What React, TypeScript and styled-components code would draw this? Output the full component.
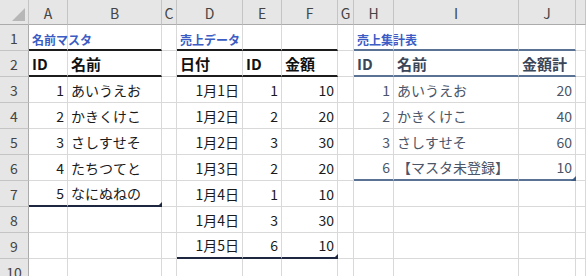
import React from "react";
import styled, { createGlobalStyle, css } from "styled-components";

type Align = "left" | "right";
type Tone = "plain" | "title" | "head" | "body" | "sumHead" | "sumBody";
type Rule = "grid" | "ink" | "navy" | "slate";

interface Cell {
  text?: string;
  align?: Align;
  tone?: Tone;
  rule?: Rule;
  handle?: "ink" | "slate";
}

const FONT = `"Noto Sans CJK JP", "Liberation Sans", sans-serif`;

const COLUMNS = [
  { label: "A", width: 39 },
  { label: "B", width: 94 },
  { label: "C", width: 15 },
  { label: "D", width: 66 },
  { label: "E", width: 39 },
  { label: "F", width: 56 },
  { label: "G", width: 16 },
  { label: "H", width: 40 },
  { label: "I", width: 125 },
  { label: "J", width: 57 },
  { label: "", width: 10 },
];
const ROW_COUNT = 10;

interface Table {
  title: string;
  cols: string[];
  heads: string[];
  align: Align[];
  rows: (string | number)[][];
  summary?: boolean;
}

const TABLES: Table[] = [
  {
    title: "名前マスタ",
    cols: ["A", "B"],
    heads: ["ID", "名前"],
    align: ["right", "left"],
    rows: [
      [1, "あいうえお"],
      [2, "かきくけこ"],
      [3, "さしすせそ"],
      [4, "たちつてと"],
      [5, "なにぬねの"],
    ],
  },
  {
    title: "売上データ",
    cols: ["D", "E", "F"],
    heads: ["日付", "ID", "金額"],
    align: ["right", "right", "right"],
    rows: [
      ["1月1日", 1, 10],
      ["1月2日", 2, 20],
      ["1月2日", 3, 30],
      ["1月3日", 2, 20],
      ["1月4日", 1, 10],
      ["1月4日", 3, 30],
      ["1月5日", 6, 10],
    ],
  },
  {
    title: "売上集計表",
    cols: ["H", "I", "J"],
    heads: ["ID", "名前", "金額計"],
    align: ["right", "left", "right"],
    rows: [
      [1, "あいうえお", 20],
      [2, "かきくけこ", 40],
      [3, "さしすせそ", 60],
      [6, "【マスタ未登録】", 10],
    ],
    summary: true,
  },
];

// lay the three list objects out into a sheet map keyed like "B3"
const buildSheet = () => {
  const sheet: Record<string, Cell> = {};
  TABLES.forEach((t) => {
    const edge: Rule = t.summary ? "slate" : "ink";
    t.cols.forEach((col, i) => {
      sheet[`${col}1`] = { text: i === 0 ? t.title : undefined, tone: "title", rule: edge };
      sheet[`${col}2`] = { text: t.heads[i], tone: t.summary ? "sumHead" : "head", rule: edge };
      t.rows.forEach((row, r) => {
        const last = r === t.rows.length - 1;
        sheet[`${col}${r + 3}`] = {
          text: String(row[i]),
          align: t.align[i],
          tone: t.summary ? "sumBody" : "body",
          rule: last ? (t.summary ? "slate" : "navy") : "grid",
          handle: last && i === t.cols.length - 1 ? (t.summary ? "slate" : "ink") : undefined,
        };
      });
    });
  });
  return sheet;
};

const SHEET = buildSheet();

const GlobalStyle = createGlobalStyle`
  html, body {
    margin: 0;
    padding: 0;
    background: #ffffff;
    overflow: hidden;
  }
`;

const Sheet = styled.div`
  display: grid;
  grid-template-columns: 29px ${COLUMNS.map((c) => `${c.width}px`).join(" ")};
  grid-template-rows: 25px repeat(${ROW_COUNT}, 26px);
  width: 586px;
  height: 276px;
  overflow: hidden;
  font-family: ${FONT};
  background: #ffffff;
`;

const Corner = styled.div`
  position: relative;
  background: #e6e6e6;
  border-right: 1px solid #c4c4c4;
  border-bottom: 1px solid #ababab;
  box-sizing: border-box;

  &::after {
    content: "";
    position: absolute;
    right: 3px;
    bottom: 3px;
    border-style: solid;
    border-width: 0 0 13px 13px;
    border-color: transparent transparent #b7b7b7 transparent;
  }
`;

const ColHead = styled.div`
  display: flex;
  align-items: center;
  justify-content: center;
  background: #e6e6e6;
  border-right: 1px solid #c4c4c4;
  border-bottom: 1px solid #ababab;
  box-sizing: border-box;
  color: #444444;
  font-size: 14px;
  padding-top: 1px;
`;

const RowHead = styled.div`
  display: flex;
  align-items: center;
  justify-content: center;
  background: #e6e6e6;
  border-right: 1px solid #ababab;
  border-bottom: 1px solid #c4c4c4;
  box-sizing: border-box;
  color: #444444;
  font-size: 14px;
`;

const ruleColor: Record<Rule, string> = {
  grid: "1px solid #d9d9d9",
  ink: "2px solid #1c1c1c",
  navy: "2px solid #1d2740",
  slate: "2px solid #5a7294",
};

const toneStyle: Record<Tone, ReturnType<typeof css>> = {
  plain: css``,
  title: css`
    font-size: 12px;
    font-weight: 700;
    color: #3a5cc4;
    align-items: flex-end;
    padding-bottom: 3px;
  `,
  head: css`
    font-size: 15px;
    font-weight: 700;
    color: #111111;
  `,
  body: css`
    font-size: 14px;
    color: #1a1a1a;
  `,
  sumHead: css`
    font-size: 15px;
    font-weight: 700;
    color: #3b4658;
  `,
  sumBody: css`
    font-size: 14px;
    color: #4b5568;
  `,
};

const SheetCell = styled.div<{ $align: Align; $tone: Tone; $rule: Rule }>`
  position: relative;
  display: flex;
  align-items: center;
  justify-content: ${(p) => (p.$align === "right" ? "flex-end" : "flex-start")};
  padding: 0 3px;
  box-sizing: border-box;
  border-right: 1px solid #d9d9d9;
  border-bottom: ${(p) => ruleColor[p.$rule]};
  white-space: nowrap;
  overflow: visible;
  line-height: 1;
  ${(p) => toneStyle[p.$tone]}
`;

const Handle = styled.span<{ $tone: "ink" | "slate" }>`
  position: absolute;
  right: -1px;
  bottom: -2px;
  border-style: solid;
  border-width: 0 0 5px 5px;
  border-color: transparent transparent ${(p) => (p.$tone === "ink" ? "#1d2740" : "#3d5a85")} transparent;
`;

export default function App() {
  return (
    <>
      <GlobalStyle />
      <Sheet>
        <Corner />
        {COLUMNS.map((c, i) => (
          <ColHead key={`h${i}`}>{c.label}</ColHead>
        ))}
        {Array.from({ length: ROW_COUNT }, (_, r) => {
          const row = r + 1;
          return (
            <React.Fragment key={row}>
              <RowHead>{row}</RowHead>
              {COLUMNS.map((c, i) => {
                const cell = SHEET[`${c.label}${row}`] ?? {};
                return (
                  <SheetCell
                    key={`${row}-${i}`}
                    $align={cell.align ?? "left"}
                    $tone={cell.tone ?? "plain"}
                    $rule={cell.rule ?? "grid"}
                  >
                    {cell.text}
                    {cell.handle && <Handle $tone={cell.handle} />}
                  </SheetCell>
                );
              })}
            </React.Fragment>
          );
        })}
      </Sheet>
    </>
  );
}
